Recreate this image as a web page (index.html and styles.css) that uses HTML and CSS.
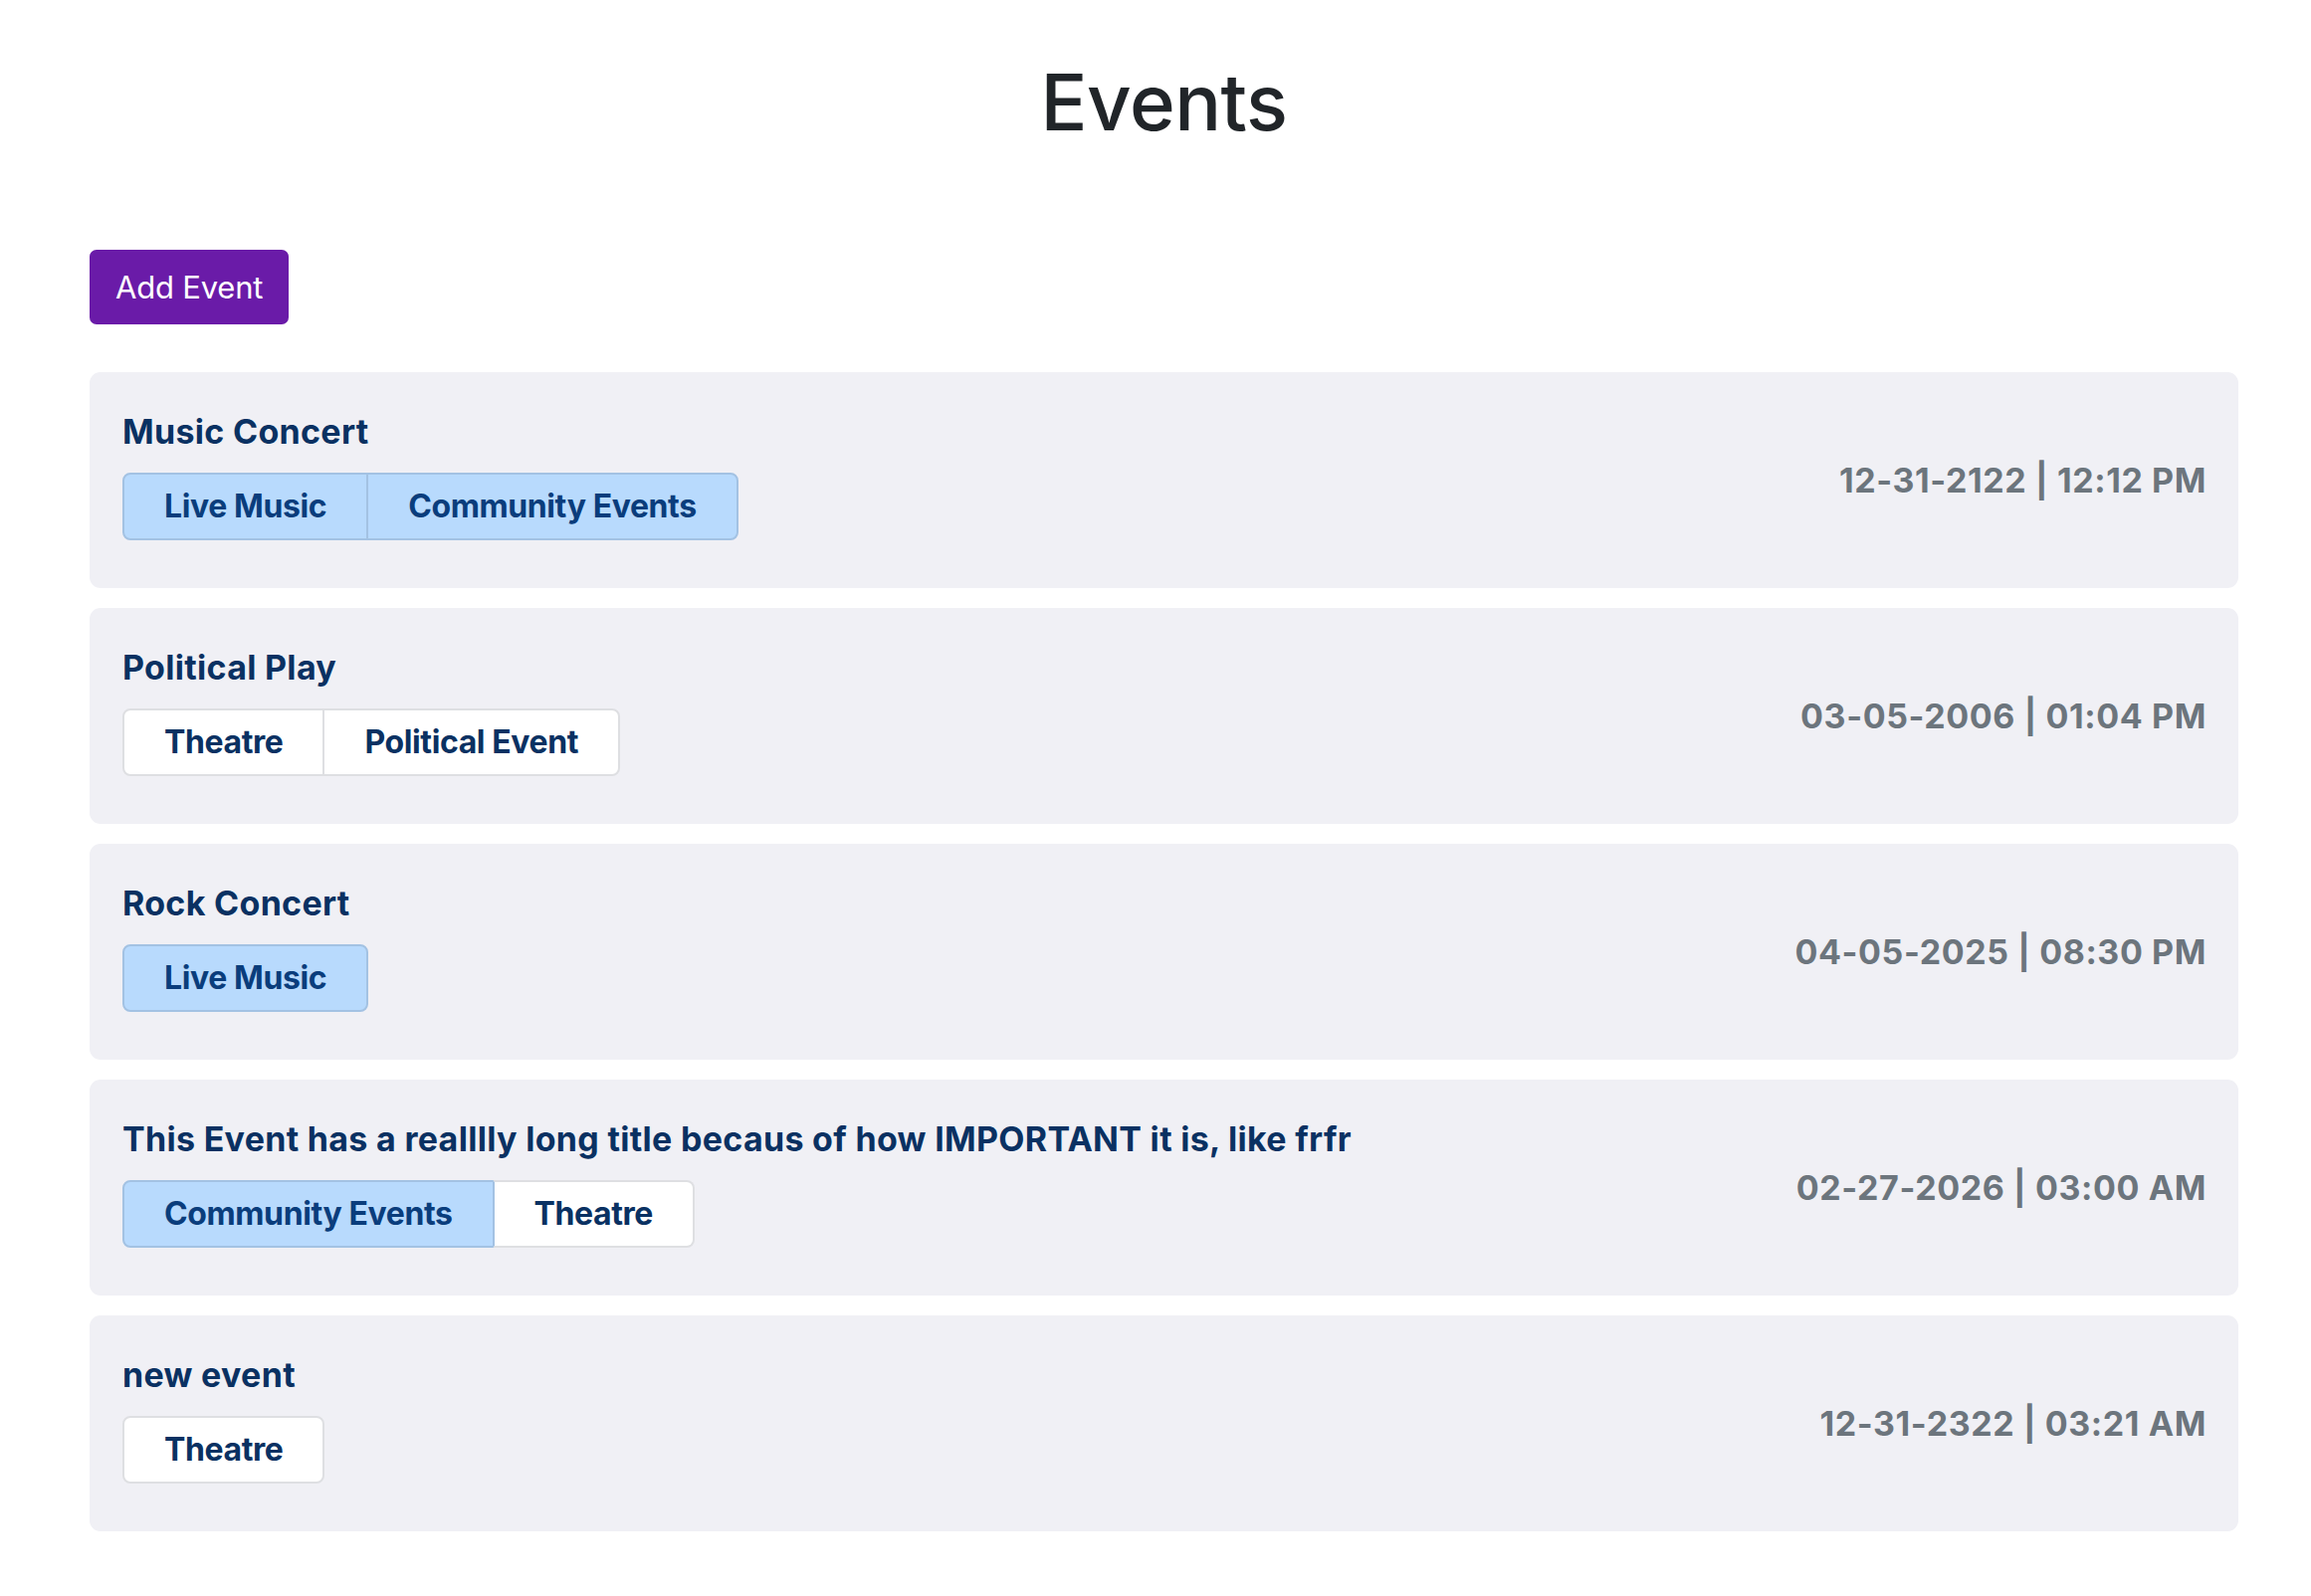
FILE: index.html
```html
<!DOCTYPE html>
<html lang="en">
<head>
<meta charset="utf-8">
<title>Events</title>
<link rel="stylesheet" href="styles.css">
</head>
<body>
<main class="page">
  <h1 class="page-title">Events</h1>
  <div class="toolbar">
    <button class="btn-add" type="button">Add Event</button>
  </div>
  <ul class="event-list">
    <li class="event-card">
      <div class="event-info">
        <h2 class="event-title">Music Concert</h2>
        <div class="tag-group">
          <span class="tag tag-blue">Live Music</span><span class="tag tag-blue">Community Events</span>
        </div>
      </div>
      <div class="event-date">12-31-2122 | 12:12 PM</div>
    </li>
    <li class="event-card">
      <div class="event-info">
        <h2 class="event-title">Political Play</h2>
        <div class="tag-group">
          <span class="tag tag-white">Theatre</span><span class="tag tag-white">Political Event</span>
        </div>
      </div>
      <div class="event-date">03-05-2006 | 01:04 PM</div>
    </li>
    <li class="event-card">
      <div class="event-info">
        <h2 class="event-title">Rock Concert</h2>
        <div class="tag-group">
          <span class="tag tag-blue">Live Music</span>
        </div>
      </div>
      <div class="event-date">04-05-2025 | 08:30 PM</div>
    </li>
    <li class="event-card">
      <div class="event-info">
        <h2 class="event-title">This Event has a realllly long title becaus of how IMPORTANT it is, like frfr</h2>
        <div class="tag-group">
          <span class="tag tag-blue">Community Events</span><span class="tag tag-white">Theatre</span>
        </div>
      </div>
      <div class="event-date">02-27-2026 | 03:00 AM</div>
    </li>
    <li class="event-card">
      <div class="event-info">
        <h2 class="event-title">new event</h2>
        <div class="tag-group">
          <span class="tag tag-white">Theatre</span>
        </div>
      </div>
      <div class="event-date">12-31-2322 | 03:21 AM</div>
    </li>
  </ul>
</main>
</body>
</html>
```
FILE: styles.css
```css
* { box-sizing: border-box; }

html, body {
  margin: 0;
  padding: 0;
  background: #ffffff;
}

body {
  font-family: Inter, "Noto Sans", "Liberation Sans", sans-serif;
  color: #212529;
}

.page {
  padding: 56px 73px 40px 90px;
}

.page-title {
  margin: 0;
  text-align: center;
  font-size: 78px;
  font-weight: 500;
  line-height: 94px;
  color: #212529;
  letter-spacing: -0.5px;
}

.toolbar {
  margin-top: 101px;
  display: flex;
}

.btn-add {
  font-family: inherit;
  font-size: 31px;
  font-weight: 400;
  line-height: 48px;
  height: 75px;
  padding: 0 26px;
  color: #ffffff;
  background: #6a1ba8;
  border: none;
  border-radius: 7px;
  letter-spacing: -0.2px;
}

.event-list {
  list-style: none;
  margin: 48px 0 0;
  padding: 0;
  display: flex;
  flex-direction: column;
  gap: 20px;
}

.event-card {
  background: #f0f0f5;
  border-radius: 11px;
  height: 217px;
  padding: 40px 32px 0 33px;
  display: flex;
  align-items: center;
  justify-content: space-between;
}

.event-info {
  align-self: flex-start;
  display: flex;
  flex-direction: column;
  align-items: flex-start;
}

.event-title {
  margin: 0;
  font-size: 34px;
  line-height: 40px;
  font-weight: 700;
  color: #0a3162;
  letter-spacing: 0.3px;
}

.tag-group {
  margin-top: 21px;
  display: flex;
}

.tag {
  display: block;
  font-size: 32px;
  font-weight: 700;
  line-height: 48px;
  padding: 8px 40px;
  border: 2px solid;
  letter-spacing: -0.4px;
}

.tag + .tag {
  margin-left: -2px;
}

.tag:first-child {
  border-top-left-radius: 8px;
  border-bottom-left-radius: 8px;
}

.tag:last-child {
  border-top-right-radius: 8px;
  border-bottom-right-radius: 8px;
}

.tag-blue {
  background: #b8dafd;
  border-color: #a3c2e3;
  color: #0a3d7c;
}

.tag-white {
  background: #ffffff;
  border-color: #dedfe2;
  color: #0a3162;
}

.tag-blue + .tag-white {
  border-left-color: #a3c2e3;
}

.event-date {
  margin-top: -40px;
  font-size: 34px;
  font-weight: 700;
  color: #6c757d;
  letter-spacing: 0.6px;
  white-space: nowrap;
}
```
